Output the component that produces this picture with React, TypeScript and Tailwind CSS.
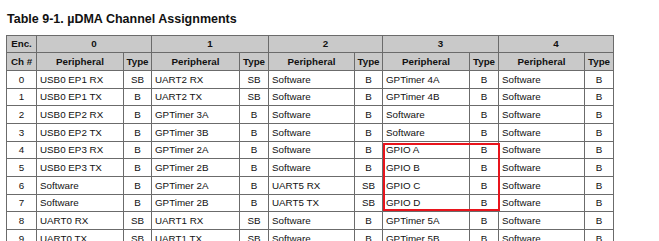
import React from "react";

const widths = [29, 86, 27, 87, 28, 85, 27, 86, 28, 85, 28];
const heights = [16, 17, 17, 16, 17, 17, 16, 17, 17, 16, 17, 17];
const rowsData: [string, string, string, string, string, string, string, string, string, string][] = [
  ["USB0 EP1 RX", "SB", "UART2 RX", "SB", "Software", "B", "GPTimer 4A", "B", "Software", "B"],
  ["USB0 EP1 TX", "B", "UART2 TX", "SB", "Software", "B", "GPTimer 4B", "B", "Software", "B"],
  ["USB0 EP2 RX", "B", "GPTimer 3A", "B", "Software", "B", "Software", "B", "Software", "B"],
  ["USB0 EP2 TX", "B", "GPTimer 3B", "B", "Software", "B", "Software", "B", "Software", "B"],
  ["USB0 EP3 RX", "B", "GPTimer 2A", "B", "Software", "B", "GPIO A", "B", "Software", "B"],
  ["USB0 EP3 TX", "B", "GPTimer 2B", "B", "Software", "B", "GPIO B", "B", "Software", "B"],
  ["Software", "B", "GPTimer 2A", "B", "UART5 RX", "SB", "GPIO C", "B", "Software", "B"],
  ["Software", "B", "GPTimer 2B", "B", "UART5 TX", "SB", "GPIO D", "B", "Software", "B"],
  ["UART0 RX", "SB", "UART1 RX", "SB", "Software", "B", "GPTimer 5A", "B", "Software", "B"],
  ["UART0 TX", "SB", "UART1 TX", "SB", "Software", "B", "GPTimer 5B", "B", "Software", "B"],
];

export default function App() {
  const gridCols = widths.map((w) => `${w}px`).join(" ");
  const rowHeights = heights.map((h) => `${h}px`).join(" ");
  return (
    <div
      className="relative w-[659px] h-[241px] overflow-hidden bg-white text-[#111]"
      style={{ fontFamily: '"Liberation Sans", Arial, sans-serif' }}
    >
      <div className="pl-[7px] pt-[12px] text-[12.5px] leading-[15px] font-bold">
        Table 9-1. µDMA Channel Assignments
      </div>
      <div
        className="mt-[8px] ml-[6px] grid w-fit gap-px p-px bg-[#6b6b6b] text-[9.8px] leading-none"
        style={{ gridTemplateColumns: gridCols, gridTemplateRows: rowHeights }}
      >
        <div className="bg-[#c9c9c9] font-bold flex items-center justify-center">Enc.</div>
        {["0", "1", "2", "3", "4"].map((n) => (
          <div key={n} className="col-span-2 bg-[#c9c9c9] font-bold flex items-center justify-center">
            {n}
          </div>
        ))}
        <div className="bg-[#c9c9c9] font-bold flex items-center justify-center">Ch #</div>
        {[0, 1, 2, 3, 4].map((n) => (
          <React.Fragment key={n}>
            <div className="bg-[#c9c9c9] font-bold flex items-center justify-center">Peripheral</div>
            <div className="bg-[#c9c9c9] font-bold flex items-center justify-center">Type</div>
          </React.Fragment>
        ))}
        {rowsData.map((r, i) => (
          <React.Fragment key={i}>
            <div className="bg-white flex items-center justify-center">{i}</div>
            {r.map((c, j) =>
              j % 2 === 0 ? (
                <div key={j} className="bg-white flex items-center pl-[3px] whitespace-nowrap">
                  {c}
                </div>
              ) : (
                <div key={j} className="bg-white flex items-center justify-center">
                  {c}
                </div>
              )
            )}
          </React.Fragment>
        ))}
      </div>
      <div className="absolute left-[383px] top-[143px] w-[117px] h-[68px] border-2 border-[#e8141c]" />
    </div>
  );
}
